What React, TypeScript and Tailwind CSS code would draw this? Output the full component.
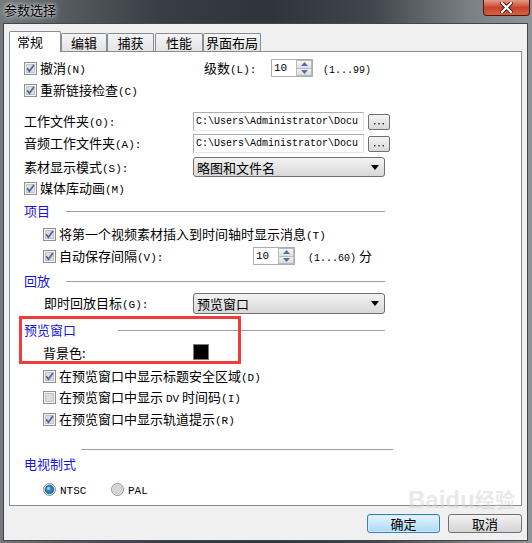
import type { ReactNode } from "react";

function Mono({ children, size = "text-[11px]" }: { children: ReactNode; size?: string }) {
  return <span className={`font-['Liberation_Mono',monospace] ${size}`}>{children}</span>;
}

function CheckBox({ checked = true }: { checked?: boolean }) {
  return (
    <svg width="13" height="13" viewBox="0 0 13 13" className="shrink-0">
      <rect x="0.5" y="0.5" width="12" height="12" fill="#f4f4f4" stroke="#8e8f8f" />
      <rect x="2" y="2" width="9" height="9" fill="#dcdcdc" />
      <rect x="2.5" y="2.5" width="8" height="8" fill="none" stroke="#c4c4c4" />
      {checked && <path d="M3.2 6.2 L5.4 9.2 L9.9 3.1" fill="none" stroke="#4d62a6" strokeWidth="1.7" />}
    </svg>
  );
}

function Radio({ checked = false }: { checked?: boolean }) {
  return (
    <svg width="13" height="13" viewBox="0 0 13 13" className="shrink-0">
      <circle cx="6.5" cy="6.5" r="6" fill="#ececec" stroke="#8e8f8f" />
      <circle
        cx="6.5"
        cy="6.5"
        r="4.3"
        fill={checked ? "#2a7fbd" : "#d6d6d6"}
        stroke={checked ? "#1b5685" : "#c2c2c2"}
        strokeWidth="0.8"
      />
      {checked && <circle cx="5.6" cy="5.4" r="1.7" fill="#8fd2f5" />}
    </svg>
  );
}

function CheckRow({ checked = true, children }: { checked?: boolean; children: ReactNode }) {
  return (
    <div className="flex items-center">
      <CheckBox checked={checked} />
      <span className="ml-[3px] whitespace-nowrap">{children}</span>
    </div>
  );
}

function Heading({ label, textW, lineW }: { label: string; textW: string; lineW?: string }) {
  return (
    <div className="flex h-[20px] items-center pl-[14px]">
      <span className={`${textW} text-[#1515dc]`}>{label}</span>
      {lineW && <div className={`${lineW} mt-[3px] h-px bg-[#a0a0a0]`} />}
    </div>
  );
}

function Spin() {
  return (
    <div className="flex h-[18px] w-[42px] border border-[#abadb3] bg-white">
      <span className="flex-1 pl-[2px] font-['Liberation_Mono',monospace] text-[11px] leading-[16px]">10</span>
      <div className="flex w-[16px] flex-col">
        <div className="flex flex-1 items-center justify-center border border-[#b9b9b9] bg-linear-to-b from-[#f7f7f7] to-[#e0e0e0]">
          <svg width="7" height="4" viewBox="0 0 7 4">
            <path d="M0 4 L3.5 0 L7 4 Z" fill="#4e6fb3" />
          </svg>
        </div>
        <div className="flex flex-1 items-center justify-center border border-t-0 border-[#b9b9b9] bg-linear-to-b from-[#f2f2f2] to-[#dadada]">
          <svg width="7" height="4" viewBox="0 0 7 4">
            <path d="M0 0 L7 0 L3.5 4 Z" fill="#4e6fb3" />
          </svg>
        </div>
      </div>
    </div>
  );
}

function Select({ value, h }: { value: string; h: string }) {
  return (
    <div
      className={`flex ${h} w-[192px] items-center justify-between rounded-[3px] border border-[#707070] bg-linear-to-b from-[#f3f3f3] to-[#d8d8d8] pl-[3px] pr-[5px]`}
    >
      <span>{value}</span>
      <svg width="8" height="5" viewBox="0 0 8 5">
        <path d="M0 0 L8 0 L4 5 Z" fill="#000" />
      </svg>
    </div>
  );
}

function PathField() {
  return (
    <div className="flex items-center">
      <div className="flex h-[19px] w-[171px] items-center overflow-hidden border border-[#abadb3] border-b-[#e3e9ef] border-r-[#dbdfe6] bg-white pl-[2px]">
        <span className="whitespace-nowrap font-['Liberation_Mono',monospace] text-[10px]">
          {"C:\\Users\\Administrator\\Docu"}
        </span>
      </div>
      <div className="ml-[4px] flex h-[16px] w-[22px] items-center justify-center rounded-[2px] border border-[#707070] bg-linear-to-b from-[#f3f3f3] to-[#d9d9d9]">
        <svg width="10" height="4" viewBox="0 0 10 4" className="mt-[5px]">
          <rect x="0" y="1" width="1.4" height="1.4" fill="#222" />
          <rect x="4.3" y="1" width="1.4" height="1.4" fill="#222" />
          <rect x="8.6" y="1" width="1.4" height="1.4" fill="#222" />
        </svg>
      </div>
    </div>
  );
}

function Tab({ w, children, extra = "" }: { w: string; children: ReactNode; extra?: string }) {
  return (
    <div
      className={`flex h-[18px] ${w} ${extra} items-center justify-center rounded-t-[2px] border border-b-0 border-[#898c95] bg-linear-to-b from-[#f5f5f5] to-[#e4e4e4]`}
    >
      {children}
    </div>
  );
}

export default function App() {
  return (
    <div className="relative flex h-[543px] w-[532px] flex-col overflow-hidden bg-[linear-gradient(90deg,#75797e_0%,#565b61_12%,#383e45_30%,#2e343b_50%,#40464d_70%,#7a7f84_88%,#8f9498_100%)] font-['Noto_Sans_CJK_SC',sans-serif] text-[13px] leading-none text-black">
      {/* title bar */}
      <div className="flex h-[23px] items-start justify-between">
        <span className="pl-[4px] pt-[2px] leading-[15px] [text-shadow:0_0_6px_rgba(255,255,255,0.9),0_0_3px_rgba(255,255,255,0.8)]">
          参数选择
        </span>
        <div className="mr-[2px] flex h-[16px] w-[47px] items-center justify-center rounded-b-[4px] border border-t-0 border-[#4b160c] bg-linear-to-b from-[#e49a86] via-[#c8442b] to-[#d8603f]">
          <svg width="13" height="11" viewBox="0 0 13 11">
            <path d="M2 1 L11 10 M11 1 L2 10" stroke="#3b1a14" strokeWidth="4" strokeLinecap="square" />
            <path d="M2 1 L11 10 M11 1 L2 10" stroke="#ffffff" strokeWidth="2.2" strokeLinecap="square" />
          </svg>
        </div>
      </div>

      {/* client area */}
      <div className="ml-[3px] flex h-[518px] w-[525px] flex-col border border-[#454545] bg-[#f0f0f0]">
        {/* tabs */}
        <div className="flex items-end pl-[5px] pt-[7px]">
          <div className="relative z-10 -mb-px flex h-[21px] w-[52px] items-center rounded-t-[2px] border border-b-0 border-[#898c95] bg-white pl-[7px] pb-[1px]">
            常规
          </div>
          <Tab w="w-[46px]">编辑</Tab>
          <Tab w="w-[47px]">捕获</Tab>
          <Tab w="w-[48px]" extra="ml-px">
            性能
          </Tab>
          <Tab w="w-[58px]">界面布局</Tab>
        </div>

        {/* panel */}
        <div className="ml-[5px] flex h-[455px] w-[513px] flex-col border border-[#898c95] bg-white pt-[6px]">
          <div className="flex h-[20px] items-center">
            <div className="flex w-[194px] pl-[14px]">
              <CheckRow>
                撤消<Mono>(N)</Mono>
              </CheckRow>
            </div>
            <span className="w-[67px]">
              级数<Mono>(L):</Mono>
            </span>
            <Spin />
            <span className="ml-[10px]">
              <Mono size="text-[10px]">(1...99)</Mono>
            </span>
          </div>

          <div className="mt-[2px] flex h-[20px] items-center pl-[14px]">
            <CheckRow>
              重新链接检查<Mono>(C)</Mono>
            </CheckRow>
          </div>

          <div className="mt-[12px] flex h-[19px] items-center">
            <span className="w-[183px] pl-[14px]">
              工作文件夹<Mono>(O):</Mono>
            </span>
            <PathField />
          </div>

          <div className="mt-[3px] flex h-[19px] items-center">
            <span className="w-[183px] pl-[14px]">
              音频工作文件夹<Mono>(A):</Mono>
            </span>
            <PathField />
          </div>

          <div className="mt-[4px] flex h-[20px] items-center">
            <span className="w-[183px] pl-[14px]">
              素材显示模式<Mono>(S):</Mono>
            </span>
            <Select value="略图和文件名" h="h-[20px]" />
          </div>

          <div className="mt-[1px] flex h-[20px] items-center pl-[14px]">
            <CheckRow>
              媒体库动画<Mono>(M)</Mono>
            </CheckRow>
          </div>

          <div className="mt-[2px]">
            <Heading label="项目" textW="w-[42px]" lineW="w-[319px]" />
          </div>

          <div className="mt-[4px] flex h-[20px] items-center pl-[33px]">
            <CheckRow>
              将第一个视频素材插入到时间轴时显示消息<Mono>(T)</Mono>
            </CheckRow>
          </div>

          <div className="mt-[2px] flex h-[20px] items-center">
            <div className="flex w-[243px] pl-[33px]">
              <CheckRow>
                自动保存间隔<Mono>(V):</Mono>
              </CheckRow>
            </div>
            <Spin />
            <span className="ml-[13px]">
              <Mono size="text-[10px]">(1...60)</Mono> 分
            </span>
          </div>

          <div className="mt-[4px]">
            <Heading label="回放" textW="w-[42px]" lineW="w-[319px]" />
          </div>

          <div className="mt-[3px] flex h-[21px] items-center">
            <span className="w-[183px] pl-[34px]">
              即时回放目标<Mono>(G):</Mono>
            </span>
            <Select value="预览窗口" h="h-[21px]" />
          </div>

          {/* preview window section, with the red annotation frame over it */}
          <div className="relative flex flex-col pt-[5px]">
            <Heading label="预览窗口" textW="w-[94px]" lineW="w-[267px]" />
            <div className="mt-[3px] flex h-[20px] items-center">
              <span className="w-[183px] pl-[33px]">背景色:</span>
              <div className="h-[16px] w-[16px] border border-[#7a7a7a] bg-black" />
            </div>
            <div className="pointer-events-none absolute left-[9px] top-[2px] h-[48px] w-[222px] border-[3px] border-[#f23b3b]" />
          </div>

          <div className="mt-[4px] flex h-[20px] items-center pl-[33px]">
            <CheckRow>
              在预览窗口中显示标题安全区域<Mono>(D)</Mono>
            </CheckRow>
          </div>
          <div className="mt-[1px] flex h-[20px] items-center pl-[33px]">
            <CheckRow checked={false}>
              在预览窗口中显示 <Mono>DV</Mono> 时间码<Mono>(I)</Mono>
            </CheckRow>
          </div>
          <div className="mt-[2px] flex h-[20px] items-center pl-[33px]">
            <CheckRow>
              在预览窗口中显示轨道提示<Mono>(R)</Mono>
            </CheckRow>
          </div>

          <div className="ml-[71px] mt-[20px] h-px w-[312px] bg-[#a0a0a0]" />

          <div className="mt-[3px]">
            <Heading label="电视制式" textW="w-[60px]" />
          </div>

          <div className="mt-[6px] flex h-[20px] items-center pl-[33px]">
            <div className="flex w-[68px] items-center">
              <Radio checked />
              <span className="ml-[4px]">
                <Mono>NTSC</Mono>
              </span>
            </div>
            <div className="flex items-center">
              <Radio />
              <span className="ml-[4px]">
                <Mono>PAL</Mono>
              </span>
            </div>
          </div>
        </div>

        {/* dialog buttons */}
        <div className="mt-[8px] flex justify-end gap-[8px] pr-[5px]">
          <div className="flex h-[19px] w-[73px] items-center justify-center rounded-[3px] border border-[#3c7fb1] bg-linear-to-b from-[#e8f5fc] to-[#a9daf5] shadow-[inset_0_0_0_1px_#c8ecff]">
            确定
          </div>
          <div className="flex h-[19px] w-[74px] items-center justify-center rounded-[3px] border border-[#707070] bg-linear-to-b from-[#f3f3f3] to-[#d4d4d4]">
            取消
          </div>
        </div>
      </div>

      {/* faint site watermark over the corner */}
      <div className="pointer-events-none absolute left-[408px] top-[488px] flex flex-col items-center text-[#d4d4d4] opacity-50">
        <span className="font-['Liberation_Sans',sans-serif] text-[24px] font-bold leading-none">
          Baidu<span className="font-['Noto_Sans_CJK_SC',sans-serif] text-[20px]">经验</span>
        </span>
      </div>
    </div>
  );
}
